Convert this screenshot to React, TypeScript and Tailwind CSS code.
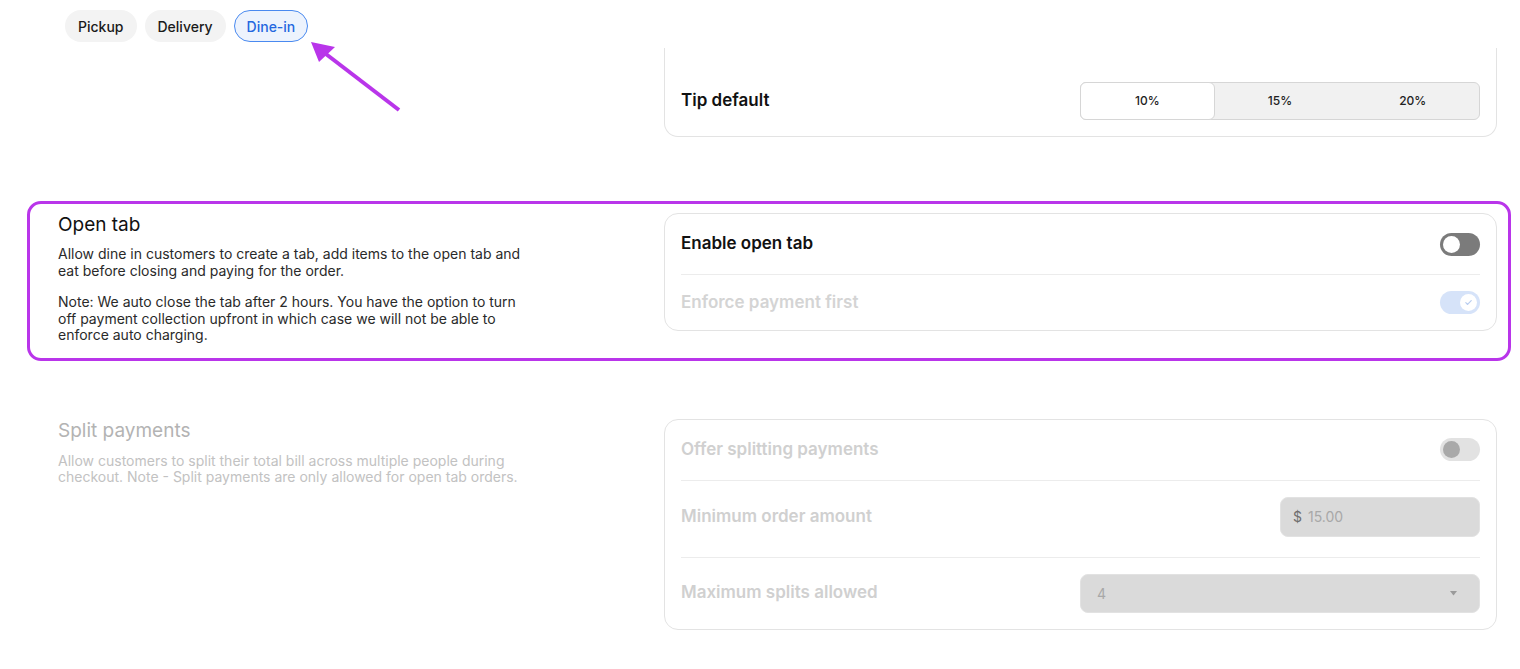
import React from "react";

const font = { fontFamily: "Inter, 'Noto Sans', sans-serif" };

function Toggle({ variant }: { variant: "off" | "checked" | "disabled" }) {
  if (variant === "off") {
    return (
      <div className="flex h-[23px] w-[40px] items-center rounded-full bg-[#7b7b7b] px-[3px]">
        <div className="h-[17px] w-[17px] rounded-full bg-white" />
      </div>
    );
  }
  if (variant === "checked") {
    return (
      <div className="flex h-[23px] w-[40px] items-center justify-end rounded-full bg-[#d6e3f9] px-[3px]">
        <div className="flex h-[17px] w-[17px] items-center justify-center rounded-full bg-white">
          <svg width="9" height="9" viewBox="0 0 10 10" fill="none">
            <path d="M2 5.2l2 2 4-4.4" stroke="#b9cdf0" strokeWidth="1.3" strokeLinecap="round" strokeLinejoin="round" />
          </svg>
        </div>
      </div>
    );
  }
  return (
    <div className="flex h-[23px] w-[40px] items-center rounded-full bg-[#e2e2e2] px-[3px]">
      <div className="h-[17px] w-[17px] rounded-full bg-[#a9a9a9]" />
    </div>
  );
}

export default function App() {
  return (
    <div className="relative min-h-[669px] w-[1520px] bg-white text-[#111]" style={font}>
      {/* order type tabs */}
      <div className="flex gap-2 pl-[65px] pt-[10px]">
        <button className="h-[32px] rounded-full bg-[#f3f3f3] px-[13px] text-[14px] font-medium text-[#1a1a1a]">
          Pickup
        </button>
        <button className="h-[32px] rounded-full bg-[#f3f3f3] px-[13px] text-[14px] font-medium text-[#1a1a1a]">
          Delivery
        </button>
        <button className="h-[32px] rounded-full border border-[#4a8af0] bg-[#edf3fd] px-[12px] text-[14px] font-medium text-[#2467e0]">
          Dine-in
        </button>
      </div>

      {/* tip card (top scrolled out) */}
      <div className="mt-[6px] grid grid-cols-[664px_833px]">
        <div />
        <div className="flex items-center justify-between rounded-b-[14px] border-x border-b border-[#e3e3e3] px-[16px] pb-[16px] pt-[34px]">
          <span className="text-[17px] font-semibold">Tip default</span>
          <div className="flex h-[38px] w-[400px] rounded-[6px] border border-[#d6d6d6] bg-[#f1f1f1] text-[12px] font-medium text-[#222]">
            <div className="-m-px flex flex-1 items-center justify-center rounded-[6px] border border-[#d6d6d6] bg-white">
              10%
            </div>
            <div className="flex flex-1 items-center justify-center">15%</div>
            <div className="flex flex-1 items-center justify-center">20%</div>
          </div>
        </div>
      </div>

      {/* open tab */}
      <div className="relative mt-[76px] grid grid-cols-[664px_833px]">
        <div className="pl-[58px]">
          <h3 className="text-[19px] leading-[24px] text-[#111]">Open tab</h3>
          <p className="mt-[9px] w-[466px] text-[14px] leading-[16.5px] text-[#2a2a2a]">
            Allow dine in customers to create a tab, add items to the open tab and eat before closing and paying for the
            order.
          </p>
          <p className="mt-[15px] w-[466px] text-[14px] leading-[16.5px] text-[#2a2a2a]">
            Note: We auto close the tab after 2 hours. You have the option to turn off payment collection upfront in
            which case we will not be able to enforce auto charging.
          </p>
        </div>
        <div className="self-start rounded-[14px] border border-[#e3e3e3] px-[16px]">
          <div className="flex h-[60px] items-center justify-between">
            <span className="text-[17px] font-semibold">Enable open tab</span>
            <Toggle variant="off" />
          </div>
          <div className="flex h-[56px] items-center justify-between border-t border-[#ececec]">
            <span className="text-[17px] font-semibold text-[#d4d4d4]">Enforce payment first</span>
            <Toggle variant="checked" />
          </div>
        </div>
        <div className="pointer-events-none absolute -top-[12px] left-[27px] h-[160px] w-[1484px] rounded-[14px] border-[3px] border-[#b935ea]" />
      </div>

      {/* split payments */}
      <div className="mt-[75px] grid grid-cols-[664px_833px]">
        <div className="pl-[58px]">
          <h3 className="text-[19px] leading-[24px] text-[#b3b3b3]">Split payments</h3>
          <p className="mt-[10px] w-[480px] text-[14px] leading-[16.5px] text-[#c2c2c2]">
            Allow customers to split their total bill across multiple people during checkout. Note - Split payments are
            only allowed for open tab orders.
          </p>
        </div>
        <div className="rounded-[14px] border border-[#e3e3e3] px-[16px] text-[17px] font-semibold text-[#d0d0d0]">
          <div className="flex h-[60px] items-center justify-between">
            <span>Offer splitting payments</span>
            <Toggle variant="disabled" />
          </div>
          <div className="flex items-center justify-between border-t border-[#ececec] pb-[20px] pt-[16px]">
            <span>Minimum order amount</span>
            <div className="flex h-[40px] w-[200px] items-center gap-[6px] rounded-[8px] border border-[#e2e2e2] bg-[#dadada] px-[12px] text-[14px] font-normal">
              <span className="text-[#6e6e6e]">$</span>
              <span className="text-[#a8a8a8]">15.00</span>
            </div>
          </div>
          <div className="flex items-center justify-between border-t border-[#ececec] py-[16px]">
            <span>Maximum splits allowed</span>
            <div className="flex h-[39px] w-[400px] items-center justify-between rounded-[8px] border border-[#e2e2e2] bg-[#dadada] pl-[16px] pr-[22px] text-[14px] font-normal text-[#a8a8a8]">
              <span>4</span>
              <svg width="7" height="5" viewBox="0 0 7 5">
                <path d="M0 0h7L3.5 4.5z" fill="#9a9a9a" />
              </svg>
            </div>
          </div>
        </div>
      </div>

      {/* annotation arrow */}
      <svg className="pointer-events-none absolute left-0 top-0" width="420" height="120" viewBox="0 0 420 120">
        <line x1="399" y1="110" x2="322" y2="51" stroke="#b935ea" strokeWidth="4" />
        <path d="M311 42 L335 47 L319 62 Z" fill="#b935ea" />
      </svg>
    </div>
  );
}
